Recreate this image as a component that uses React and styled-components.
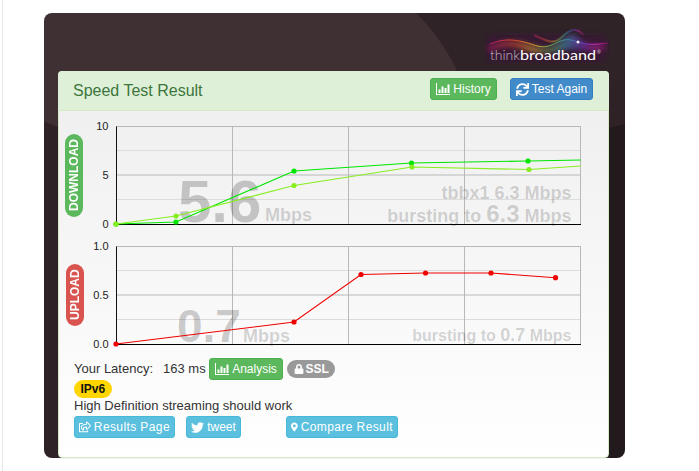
import React from 'react';
import styled, { createGlobalStyle } from 'styled-components';
import { FaSync, FaLock, FaRegShareSquare, FaTwitter, FaMapMarkerAlt } from 'react-icons/fa';

const GlobalStyle = createGlobalStyle`
  html, body { margin: 0; padding: 0; background: #fff; }
  body { font-family: "Liberation Sans", Arial, sans-serif; font-size: 13px; color: #333; }
`;

const download = {
  viewBox: '90 120 500 110',
  top: 126.5,
  bottom: 224.5,
  ticks: [['10', 126], ['5', 175], ['0', 224]],
  series: [
    { color: '#00e600', points: [[116, 224], [176, 222], [294, 171], [411.5, 163], [528, 161], [581, 160]], dots: 5 },
    { color: '#88ee22', points: [[116, 224], [176, 216], [294, 185.5], [412, 167], [529, 169.5], [581, 166]], dots: 5 },
  ],
};

const upload = {
  viewBox: '90 240 500 110',
  top: 246.5,
  bottom: 344.5,
  ticks: [['1.0', 246], ['0.5', 295], ['0.0', 344]],
  series: [
    { color: '#f00000', points: [[116, 344], [294, 322], [361, 274.5], [425.5, 273], [491, 273], [555.5, 277.7]], dots: 6 },
  ],
};

const BarsIcon = () => (
  <svg width="14" height="12" viewBox="0 0 14 12" fill="currentColor">
    <path d="M0 0h1v11h13v1H0z" />
    <path d="M2.500 6.500h2v3.500h-2zM5.500 3.500h2v6.500h-2zM8.500 5h2v5h-2zM11.500 1.500h2v8.500h-2z" />
  </svg>
);

const Logo = () => (
  <svg width="126" height="37" viewBox="0 0 126 37">
    <defs>
      <linearGradient id="wave" x1="0" x2="1" y1="0" y2="0">
        <stop offset="0" stopColor="#b81c68" />
        <stop offset="0.22" stopColor="#d84a2c" />
        <stop offset="0.38" stopColor="#d8a030" />
        <stop offset="0.52" stopColor="#68a850" />
        <stop offset="0.66" stopColor="#3888a8" />
        <stop offset="0.8" stopColor="#7038c0" />
        <stop offset="0.9" stopColor="#d028b0" />
        <stop offset="1" stopColor="#781860" />
      </linearGradient>
      <filter id="soft" x="-10%" y="-40%" width="120%" height="180%">
        <feGaussianBlur stdDeviation="2.6" />
      </filter>
      <filter id="softer" x="-10%" y="-40%" width="120%" height="180%">
        <feGaussianBlur stdDeviation="0.5" />
      </filter>
    </defs>
    <rect x="2" y="8" width="120" height="27" rx="6" fill="#3a1638" opacity="0.7" filter="url(#soft)" />
    <path d="M4 20 C20 12 32 13 44 17 S64 24 74 16 S88 4 96 12 S110 19 122 16 L122 23 C104 25 92 20 80 23 S52 28 40 23 S16 19 4 25 Z" fill="url(#wave)" opacity="0.6" filter="url(#soft)" />
    <path d="M6 17 C18 12 28 12 40 15 S58 23 70 17 S84 12 94 15 S108 18 124 16" fill="none" stroke="url(#wave)" strokeWidth="1" filter="url(#softer)" />
    <path d="M50 8 C62 14 70 18 78 10 S92 0 100 8" fill="none" stroke="url(#wave)" strokeWidth="2" opacity="0.45" filter="url(#softer)" />
    <circle cx="94" cy="15" r="1.500" fill="#fff" opacity="0.9" filter="url(#softer)" />
    <LogoThin x="6" y="33" textLength="30" lengthAdjust="spacingAndGlyphs">think</LogoThin>
    <LogoBold x="36" y="33" textLength="76" lengthAdjust="spacingAndGlyphs">broadband</LogoBold>
    <LogoMark x="113" y="27">®</LogoMark>
  </svg>
);

const Chart = ({ data, children }) => {
  const { viewBox, top, bottom, ticks, series } = data;
  const step = (bottom - top) / 4;
  return (
    <ChartSvg width="500" height="110" viewBox={viewBox}>
      <line x1="116" x2="581" y1={top + step - 0.5} y2={top + step - 0.5} stroke="#dcdcdc" />
      <line x1="116" x2="581" y1={top + step * 3 - 0.5} y2={top + step * 3 - 0.5} stroke="#dcdcdc" />
      <line x1="116" x2="581" y1={top} y2={top} stroke="#b8b8b8" />
      <line x1="116" x2="581" y1={top + step * 2 - 0.5} y2={top + step * 2 - 0.5} stroke="#b8b8b8" />
      {[232.5, 348.5, 464.5, 580.5].map((x) => (
        <line key={x} x1={x} x2={x} y1={top} y2={bottom} stroke="#b8b8b8" />
      ))}
      {children}
      <line x1="116.500" x2="116.500" y1={top} y2={bottom} stroke="#111" />
      <line x1="116" x2="581" y1={bottom} y2={bottom} stroke="#000" />
      {ticks.map(([label, y]) => (
        <Tick key={label} x="108.500" y={y + 4}>{label}</Tick>
      ))}
      {series.map((s) => (
        <g key={s.color}>
          <polyline points={s.points.map((p) => p.join(',')).join(' ')} fill="none" stroke={s.color} strokeWidth="1.1" />
          {s.points.slice(0, s.dots).map(([x, y]) => (
            <circle key={x} cx={x} cy={y} r="2.600" fill={s.color} />
          ))}
        </g>
      ))}
    </ChartSvg>
  );
};

const App = () => (
  <Page>
    <GlobalStyle />
    <Frame>
      <LogoBar>
        <Logo />
      </LogoBar>
      <Panel>
        <Heading>
          <Title>Speed Test Result</Title>
          <HeadingActions>
            <Button $variant="success" $width={67}><BarsIcon /> History</Button>
            <Button $variant="primary" $width={83}><FaSync size={13} /> Test Again</Button>
          </HeadingActions>
        </Heading>
        <Body>
          <ChartRow>
            <SideLabel $color="#5cb85c" $height={83} $shift={0}>DOWNLOAD</SideLabel>
            <Chart data={download}>
              <BigValue x="178" y="222" fontSize="60">5.6</BigValue>
              <Watermark x="265" y="221">Mbps</Watermark>
              <Watermark x="571.500" y="199" textAnchor="end">tbbx1 6.3 Mbps</Watermark>
              <Watermark x="571.500" y="222" textAnchor="end">
                bursting to <tspan fontSize="24">6.3</tspan> Mbps
              </Watermark>
            </Chart>
          </ChartRow>
          <ChartRow>
            <SideLabel $color="#d9534f" $height={62} $shift={1}>UPLOAD</SideLabel>
            <Chart data={upload}>
              <BigValue x="177" y="342" fontSize="46">0.7</BigValue>
              <Watermark x="243" y="342">Mbps</Watermark>
              <Watermark x="571.500" y="341" textAnchor="end" fontSize="16">
                bursting to <tspan fontSize="18">0.7</tspan> Mbps
              </Watermark>
            </Chart>
          </ChartRow>
          <Info>
            <LatencyRow>
              <LatencyText>
                <span>Your Latency:</span>
                <span>163 ms</span>
              </LatencyText>
              <Button $variant="success" $width={74}><BarsIcon /> Analysis</Button>
              <Badge $bg="#999" $color="#fff"><FaLock size={10} /> SSL</Badge>
            </LatencyRow>
            <Badge $bg="#ffd500" $color="#111">IPv6</Badge>
            <Streaming>High Definition streaming should work</Streaming>
            <ActionRow>
              <Button $variant="info" $width={101} $tracking={0.4}><FaRegShareSquare size={14} /> Results Page</Button>
              <Button $variant="info" $width={55}><FaTwitter size={13} /> tweet</Button>
              <Button $variant="info" $width={112} $tracking={0.4} $push={34}><FaMapMarkerAlt size={12} /> Compare Result</Button>
            </ActionRow>
          </Info>
        </Body>
      </Panel>
    </Frame>
  </Page>
);

export default App;

const variants = {
  success: ['#5cb85c', '#4cae4c'],
  primary: ['#428bca', '#357ebd'],
  info: ['#5bc0de', '#46b8da'],
};

const Page = styled.div`
  box-sizing: border-box;
  margin-left: 2px;
  border-left: 1px solid #e6e6e6;
  padding: 13px 0 0 41px;
  height: 471px;
  overflow: hidden;
`;

const Frame = styled.div`
  box-sizing: border-box;
  display: flex;
  flex-direction: column;
  width: 581px;
  height: 445px;
  padding: 0 16px 0 14px;
  border-radius: 8px;
  background:
    linear-gradient(167deg, transparent 5px, #231a1d 6px) right bottom / 16px 336px no-repeat,
    radial-gradient(ellipse 400px 200px at 250px -47px, transparent 99.5%, #2e2226 100%),
    radial-gradient(ellipse 300px 222px at 130px 130px, transparent 99.5%, #2f2328 100%),
    #3e3033;
`;

const LogoBar = styled.div`
  display: flex;
  justify-content: flex-end;
  height: 58px;
  padding-top: 14px;
  margin-right: -1px;
  box-sizing: border-box;
`;

const LogoThin = styled.text`
  font-family: "Lato", "Liberation Sans", sans-serif;
  font-size: 13px;
  font-weight: 300;
  fill: #c8b8c4;
`;

const LogoBold = styled.text`
  font-family: "Lato", "Liberation Sans", sans-serif;
  font-size: 13px;
  fill: #fff;
`;

const LogoMark = styled.text`
  font-family: "Liberation Sans", sans-serif;
  font-size: 5px;
  fill: #ddd;
`;

const Panel = styled.section`
  flex: 1;
  display: flex;
  flex-direction: column;
  box-sizing: border-box;
  border: 1px solid #d6e9c6;
  border-radius: 4px;
  background: linear-gradient(#eeeeee, #ffffff);
  box-shadow: 0 1px 1px rgba(0, 0, 0, 0.05);
`;

const Heading = styled.header`
  display: flex;
  align-items: flex-start;
  justify-content: space-between;
  box-sizing: border-box;
  height: 40px;
  margin: -1px -1px 0;
  padding: 7px 16px 0 15px;
  background: #dff0d8;
  border-bottom: 1px solid #d6e9c6;
  border-radius: 4px 4px 0 0;
`;

const Title = styled.h3`
  margin: 3px 0 0;
  font-size: 16px;
  font-weight: 400;
  line-height: 20px;
  color: #3c763d;
`;

const HeadingActions = styled.div`
  display: flex;
  gap: 13px;
`;

const Button = styled.a`
  display: inline-flex;
  align-items: center;
  justify-content: center;
  gap: 3px;
  box-sizing: border-box;
  height: 22px;
  padding: 0 4px;
  ${(p) => p.$width && `width: ${p.$width}px;`}
  ${(p) => p.$push && `margin-left: ${p.$push}px;`}
  ${(p) => p.$tracking && `letter-spacing: ${p.$tracking}px;`}
  border: 1px solid ${(p) => variants[p.$variant][1]};
  border-radius: 3px;
  background: ${(p) => variants[p.$variant][0]};
  color: #fff;
  font-size: 12px;
  line-height: 18px;
  white-space: nowrap;
`;

const Body = styled.div`
  display: flex;
  flex-direction: column;
  padding-top: 9px;
`;

const ChartRow = styled.div`
  display: flex;
  align-items: center;
  height: 110px;
  margin-bottom: 10px;
  padding-left: 6px;
`;

const SideLabel = styled.div`
  display: flex;
  align-items: center;
  justify-content: center;
  flex: none;
  box-sizing: border-box;
  width: 18px;
  height: ${(p) => p.$height}px;
  margin-left: ${(p) => p.$shift}px;
  margin-right: ${(p) => 7 - p.$shift}px;
  border-radius: 9px;
  background: ${(p) => p.$color};
  color: #fff;
  font-size: 12px;
  font-weight: 700;
  writing-mode: vertical-rl;
  transform: rotate(180deg);
`;

const ChartSvg = styled.svg`
  display: block;
  flex: none;
  overflow: visible;
`;

const Tick = styled.text`
  font-size: 11px;
  fill: #222;
  text-anchor: end;
`;

const BigValue = styled.text`
  font-weight: 700;
  fill: #000;
  fill-opacity: 0.2;
`;

const Watermark = styled.text`
  font-size: ${(p) => p.fontSize || 18}px;
  font-weight: 700;
  fill: #000;
  fill-opacity: 0.17;
`;

const Info = styled.div`
  display: flex;
  flex-direction: column;
  align-items: flex-start;
  margin-top: -2px;
  padding-left: 15px;
`;

const LatencyRow = styled.div`
  display: flex;
  align-items: center;
  gap: 4px;
  height: 22px;
`;

const LatencyText = styled.div`
  display: flex;
  flex: none;
  gap: 10px;
  width: 131px;
  margin-top: -2px;
  white-space: nowrap;
`;

const Badge = styled.span`
  display: inline-flex;
  align-items: center;
  justify-content: center;
  gap: 2px;
  box-sizing: border-box;
  height: 18px;
  padding: 0 6.5px;
  border-radius: 9px;
  background: ${(p) => p.$bg};
  color: ${(p) => p.$color};
  font-size: 12px;
  font-weight: 700;
`;

const Streaming = styled.div`
  height: 18px;
  line-height: 15px;
`;

const ActionRow = styled.div`
  display: flex;
  gap: 11px;
`;
